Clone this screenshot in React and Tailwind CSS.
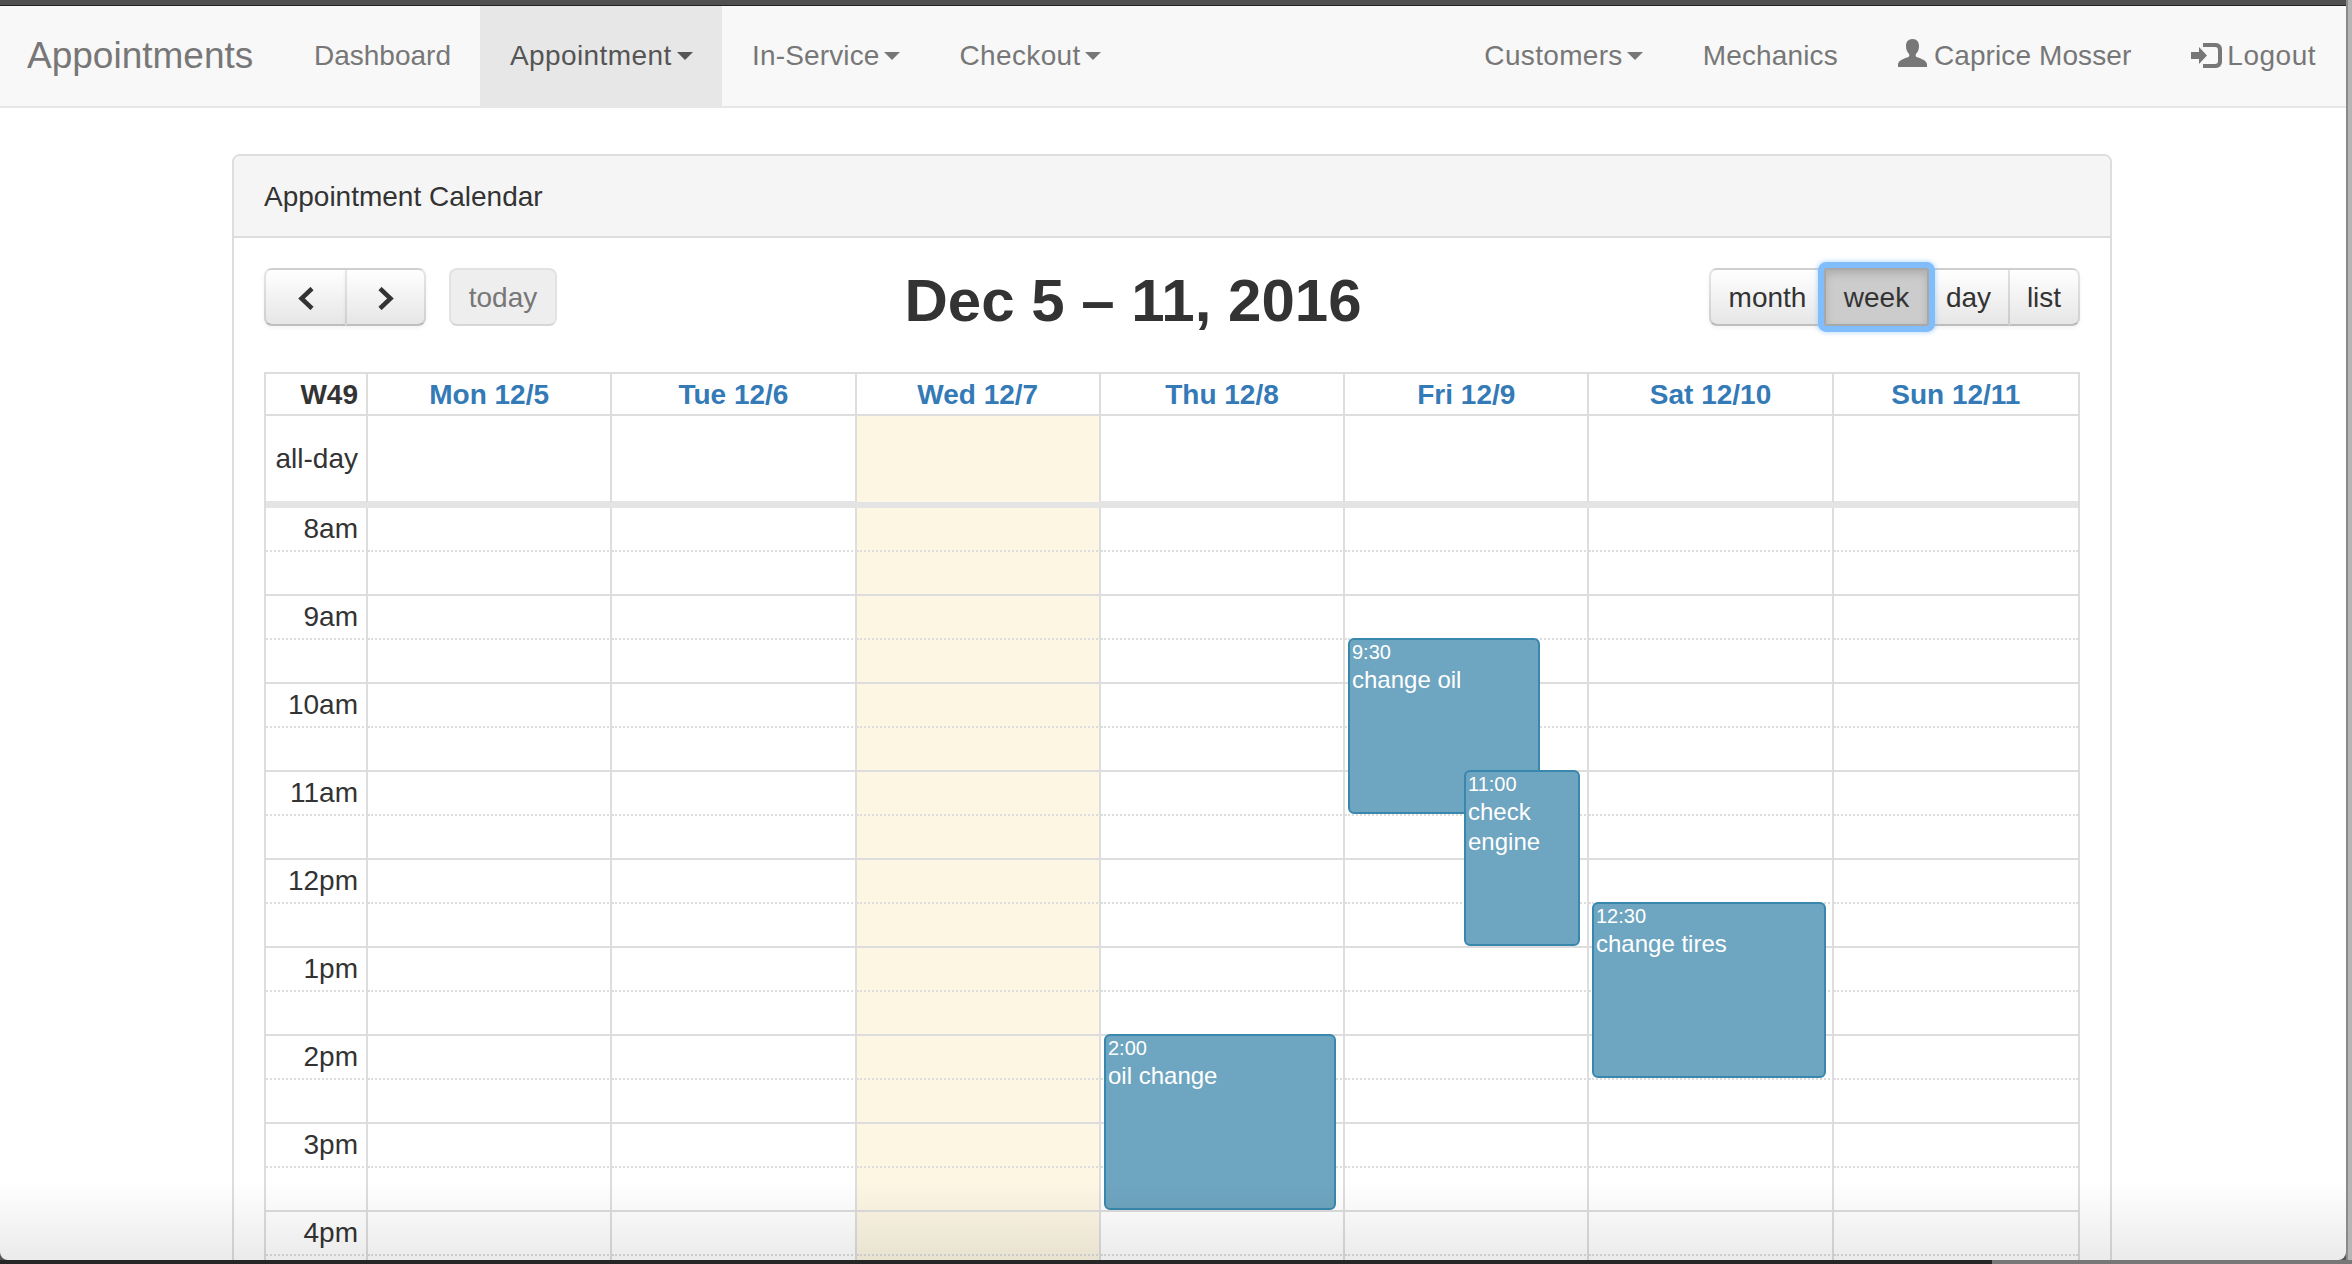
import React from 'react'

const days = ['Mon 12/5', 'Tue 12/6', 'Wed 12/7', 'Thu 12/8', 'Fri 12/9', 'Sat 12/10', 'Sun 12/11']
const hours = ['8am', '9am', '10am', '11am', '12pm', '1pm', '2pm', '3pm', '4pm']

const events = [
  { time: '9:30', title: 'change oil', pos: 'left-[1082px] top-[130px] w-[192px] h-[176px]' },
  { time: '11:00', title: 'check engine', pos: 'left-[1198px] top-[262px] w-[116px] h-[176px]' },
  { time: '12:30', title: 'change tires', pos: 'left-[1326px] top-[394px] w-[234px] h-[176px]' },
  { time: '2:00', title: 'oil change', pos: 'left-[838px] top-[526px] w-[232px] h-[176px]' },
]

const rowGrid = 'grid grid-cols-[102px_repeat(7,minmax(0,1fr))]'
const btn = 'flex items-center justify-center h-[58px] pt-[2px] border-2 border-black/10 border-b-black/25 bg-linear-to-b from-white to-[#e6e6e6] shadow-[inset_0_2px_0_rgba(255,255,255,0.2),0_2px_4px_rgba(0,0,0,0.05)] text-[28px] text-[#333]'

function Caret({ gap = 'ml-1' }) {
  return <span className={`inline-block ${gap} border-t-8 border-x-8 border-x-transparent border-t-current`} />
}

function NavItem({ children, className = '' }) {
  return <a className={`flex items-center h-full px-[30px] ${className}`}>{children}</a>
}

function UserIcon() {
  return (
    <svg width="29" height="28" viewBox="0 0 29 28" className="mr-[7px] -mt-[6px]" fill="#777">
      <path d="M14.500 0C10 0 8 3 8 7c0 3 1 6 3 8 .6.8.4 2.400-.6 3C7 19.500 1 20.500 0 25v3h29v-3c-1-4.500-7-5.500-10.400-7-1-.6-1.200-2.200-.6-3 2-2 3-5 3-8 0-4-2-7-6.500-7z" />
    </svg>
  )
}

function LoginIcon() {
  return (
    <svg width="31" height="25" viewBox="0 0 31 25" className="mr-[5px] -mt-[2px]" fill="#777">
      <path d="M0 9h8V4l8 8.500-8 8.500v-5H0z" />
      <path d="M12 0h13a6 6 0 0 1 6 6v13a6 6 0 0 1-6 6H12v-4h12a3 3 0 0 0 3-3V7a3 3 0 0 0-3-3H12z" />
    </svg>
  )
}

function Chevron({ d }) {
  return (
    <svg width="16" height="23" viewBox="0 0 16 23" fill="none" stroke="#333" strokeWidth="4.500">
      <path d={d} />
    </svg>
  )
}

export default function App() {
  return (
    <div className="w-[2352px] h-[1264px] overflow-hidden flex flex-col font-['Liberation_Sans',sans-serif] text-[#333]">
      <div className="flex h-[1260px] bg-[#555]">
        <div className="relative w-[2346px] h-[1260px] overflow-hidden rounded-b-[8px] bg-white">
          <div className="h-[6px] bg-[#505050] border-b border-[#222]" />

          {/* navbar */}
          <nav className="flex items-center justify-between h-[102px] bg-[#f8f8f8] border-b-2 border-[#e7e7e7] text-[28px] text-[#777]">
            <div className="flex items-center h-full">
              <a className="flex items-center w-[284px] pl-[27px] text-[37px]">Appointments</a>
              <NavItem className="w-[196px]">Dashboard</NavItem>
              <NavItem className="w-[242px] bg-[#e7e7e7] text-[#555] tracking-[0.4px]">Appointment<Caret gap="ml-[5px]" /></NavItem>
              <NavItem className="tracking-[0.15px]">In-Service<Caret /></NavItem>
              <NavItem className="tracking-[0.35px]">Checkout<Caret /></NavItem>
            </div>
            <div className="flex items-center h-full">
              <NavItem className="tracking-[0.33px]">Customers<Caret /></NavItem>
              <NavItem className="tracking-[0.15px]">Mechanics</NavItem>
              <NavItem className="tracking-[0.1px]"><UserIcon />Caprice Mosser</NavItem>
              <NavItem className="tracking-[0.5px]"><LoginIcon />Logout</NavItem>
            </div>
          </nav>

          {/* panel */}
          <div className="w-[1880px] ml-[232px] mt-[46px] border-2 border-[#ddd] rounded-[8px]">
            <div className="flex items-center h-[82px] px-[30px] pt-[1px] bg-[#f5f5f5] border-b-2 border-[#ddd] rounded-t-[6px] text-[28px]">
              Appointment Calendar
            </div>
            <div className="pt-[30px] px-[30px]">
              <div className="flex items-start justify-between h-[58px] mb-[46px]">
                <div className="flex gap-[23px]">
                  <div className="flex">
                    <button className={`${btn} w-[81px] rounded-l-[8px] border-r-0`}>
                      <Chevron d="M14 1.500 3.500 11.500 14 21.500" />
                    </button>
                    <button className={`${btn} w-[81px] rounded-r-[8px]`}>
                      <Chevron d="M2 1.500 12.500 11.500 2 21.500" />
                    </button>
                  </div>
                  <button className="flex items-center justify-center w-[108px] h-[58px] pt-[2px] rounded-[8px] border-2 border-[#e2e2e2] border-b-[#d6d6d6] bg-[#eeeeee] text-[28px] text-[#777]">
                    today
                  </button>
                </div>
                <h2 className="text-[60px] leading-[58px] font-bold text-[#333] mt-[4px]">Dec 5 – 11, 2016</h2>
                <div className="flex">
                  <button className={`${btn} w-[115px] rounded-l-[8px] border-r-0`}>month</button>
                  <button className="relative z-10 flex items-center justify-center w-[105px] h-[58px] pt-[2px] rounded-[3px] bg-[#cccccc] border-2 border-[#a8a8a8] text-[28px] text-[#333] shadow-[inset_0_4px_8px_rgba(0,0,0,0.15),0_0_0_6px_#82bdfb,0_0_4px_7px_rgba(130,189,251,0.5)]">
                    week
                  </button>
                  <button className={`${btn} w-[81px] border-l-0`}>day</button>
                  <button className={`${btn} w-[70px] rounded-r-[8px] border-l-0`}>list</button>
                </div>
              </div>

              {/* calendar */}
              <div className="w-[1816px] border-x-2 border-t-2 border-[#ddd]">
                <div className={`${rowGrid} h-[42px] border-b-2 border-[#ddd] text-[28px] leading-[41px] font-bold`}>
                  <div className="border-r-2 border-[#ddd] pr-[8px] text-right">W49</div>
                  {days.map((day, i) => (
                    <div key={day} className={`text-center text-[#337ab7] ${i < 6 ? 'border-r-2 border-[#ddd]' : ''}`}>{day}</div>
                  ))}
                </div>
                <div className={`${rowGrid} h-[85px] text-[28px]`}>
                  <div className="border-r-2 border-[#ddd] pr-[8px] text-right leading-[86px]">all-day</div>
                  {days.map((day, i) => (
                    <div key={day} className={`${i === 2 ? 'bg-[#fdf6e3]' : ''} ${i < 6 ? 'border-r-2 border-[#ddd]' : ''}`} />
                  ))}
                </div>
                <div className="h-[7px] bg-[#e4e4e4]" />

                <div className="relative">
                  {hours.map((hour) => (
                    <div key={hour}>
                      <div className={`${rowGrid} h-[44px] text-[28px]`}>
                        <div className="border-r-2 border-b-2 border-r-[#ddd] border-b-[#ddd] border-dotted [border-right-style:solid] pr-[8px] text-right leading-[41px]">{hour}</div>
                        {days.map((day, i) => (
                          <div key={day} className={`border-b-2 border-b-[#ddd] border-dotted ${i === 2 ? 'bg-[#fdf6e3]' : ''} ${i < 6 ? 'border-r-2 border-r-[#ddd] [border-right-style:solid]' : ''}`} />
                        ))}
                      </div>
                      <div className={`${rowGrid} h-[44px]`}>
                        <div className="border-r-2 border-b-2 border-[#ddd]" />
                        {days.map((day, i) => (
                          <div key={day} className={`border-b-2 border-[#ddd] ${i === 2 ? 'bg-[#fdf6e3]' : ''} ${i < 6 ? 'border-r-2' : ''}`} />
                        ))}
                      </div>
                    </div>
                  ))}

                  {events.map((ev) => (
                    <div key={ev.time} className={`absolute ${ev.pos} px-[2px] bg-[#6ea5c0] border-2 border-[#3a87ad] rounded-[6px] text-white`}>
                      <div className="text-[20px] leading-[25px]">{ev.time}</div>
                      <div className="text-[24px] leading-[30px]">{ev.title}</div>
                    </div>
                  ))}
                </div>
              </div>
            </div>
          </div>

          {/* window fade at the bottom */}
          <div className="absolute bottom-0 inset-x-0 h-[80px] bg-linear-to-b from-transparent to-black/8 pointer-events-none" />
        </div>
        <div className="w-[6px] bg-[#b5b5b5] border-l-2 border-[#8a8a8a]" />
      </div>
      <div className="flex h-[4px]">
        <div className="w-[1992px] bg-[#262626]" />
        <div className="flex-1 bg-[#777]" />
      </div>
    </div>
  )
}
